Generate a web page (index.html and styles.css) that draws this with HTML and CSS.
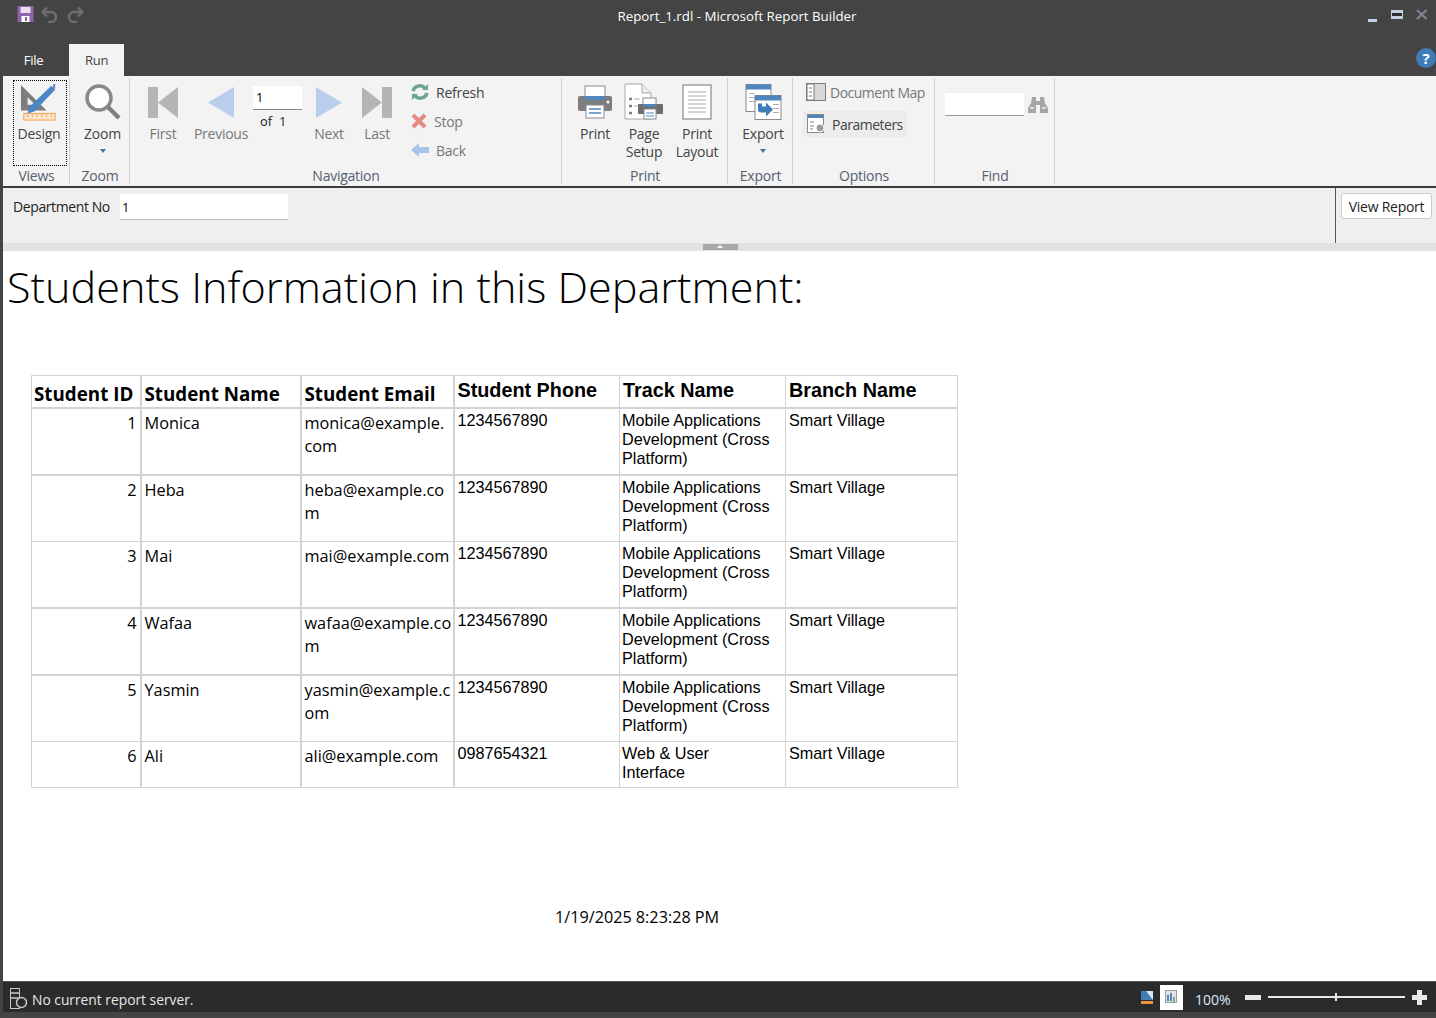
FILE: index.html
```html
<!DOCTYPE html>
<html lang="en">
<head>
    <meta charset="UTF-8">
    <meta name="viewport" content="width=device-width, initial-scale=1.0">
    <title>Report_1.rdl - Microsoft Report Builder</title>
    <link rel="stylesheet" href="styles.css">
</head>

<body>
    <header class="titlebar">
        <div class="qat">
            <svg width="18" height="17" viewBox="0 0 18 17"><rect x="0.5" y="0" width="16" height="16" fill="#8e63a9"/><rect x="3.5" y="1" width="10" height="6" fill="#e8e0f0"/><rect x="4.5" y="10" width="8" height="6" fill="#fff"/><rect x="8" y="11" width="2" height="4" fill="#8e63a9"/></svg>
            <svg width="20" height="17" viewBox="0 0 20 17" fill="none" stroke="#6e6e6e" stroke-width="2.4"><path d="M7 1.5 2.5 6 7 10.5"/><path d="M3 6h8a5 5 0 0 1 0 10H8"/></svg>
            <svg width="20" height="17" viewBox="0 0 20 17" fill="none" stroke="#6e6e6e" stroke-width="2.4"><path d="M13 1.5 17.500 6 13 10.500"/><path d="M17 6H9a5 5 0 0 0 0 10h3"/></svg>
        </div>
        <div class="window-title">Report_1.rdl - Microsoft Report Builder</div>
        <div class="window-btns">
            <svg class="win-min" width="12" height="6" viewBox="0 0 12 6"><rect x="1" y="2" width="9" height="3" fill="#c3cfe2"/></svg>
            <svg width="13" height="10" viewBox="0 0 13 10"><rect x="0.500" y="0.500" width="11" height="8" fill="#2e2e2e" stroke="#c3cfe2"/><rect x="0" y="0" width="12" height="3" fill="#c3cfe2"/><rect x="0" y="6" width="12" height="3" fill="#c3cfe2"/></svg>
            <svg width="12" height="11" viewBox="0 0 12 11"><path d="M1 1l9.500 9M10.500 1 1 10" stroke="#7b8494" stroke-width="2.400"/></svg>
        </div>
    </header>

    <nav class="tabs">
        <a href="#" class="tab">File</a>
        <a href="#" class="tab active">Run</a>
        <span class="help">?</span>
    </nav>

    <div class="ribbon">
        <section class="group group-views">
            <div class="group-body">
                <button class="big focused">
                    <svg class="icon" width="42" height="40" viewBox="0 0 42 40"><path d="M2 2v27h27zM9 15v8h8z" fill="#7d7d7d" fill-rule="evenodd"/><path d="M10 26 34 3l4 4-22 23-7 2z" fill="#4a86c8"/><rect x="36" y="1" width="2" height="5" fill="#4a86c8"/><rect x="5" y="32" width="33" height="7" fill="#fbe6cc" stroke="#f0a050"/><path d="M9 33v3M14 33v3M19 33v3M24 33v3M29 33v3M34 33v3" stroke="#f0a050"/></svg>
                    <span>Design</span>
                </button>
            </div>
            <div class="group-label">Views</div>
        </section>

        <section class="group group-zoom">
            <div class="group-body">
                <button class="big wide">
                    <svg class="icon" width="38" height="38" viewBox="0 0 38 38" fill="none"><circle cx="15" cy="15" r="12" fill="#fff" stroke="#8a8a8a" stroke-width="3.500"/><path d="M24 24l11 11" stroke="#808080" stroke-width="4.500"/></svg>
                    <span>Zoom</span>
                    <i class="caret"></i>
                </button>
            </div>
            <div class="group-label">Zoom</div>
        </section>

        <section class="group group-nav">
            <div class="group-body">
                <button class="big off nav-first">
                    <svg class="icon" width="32" height="32" viewBox="0 0 32 32"><rect x="1" y="1" width="10" height="31" fill="#b5b5b5"/><path d="M11 16.500 31 1v31z" fill="#b5b5b5"/></svg>
                    <span>First</span>
                </button>
                <button class="big off nav-prev">
                    <svg class="icon" width="28" height="32" viewBox="0 0 28 32"><path d="M1 16.500 27 1v31z" fill="#b9cdec"/></svg>
                    <span>Previous</span>
                </button>
                <div class="pager">
                    <input class="page-box" type="text" value="1">
                    <div class="page-of">of&nbsp; 1</div>
                </div>
                <button class="big off nav-next">
                    <svg class="icon" width="28" height="32" viewBox="0 0 28 32"><path d="M27 16.500 1 1v31z" fill="#b9cdec"/></svg>
                    <span>Next</span>
                </button>
                <button class="big off nav-last">
                    <svg class="icon" width="32" height="32" viewBox="0 0 32 32"><path d="M21 16.500 1 1v31z" fill="#b5b5b5"/><rect x="21" y="1" width="10" height="31" fill="#b5b5b5"/></svg>
                    <span>Last</span>
                </button>
                <div class="small-col">
                    <button class="small on">
                        <svg width="20" height="20" viewBox="0 0 20 20" fill="none" stroke="#6ea68d" stroke-width="3.500"><path d="M3 9a7 6.500 0 0 1 12-3"/><path d="M17 11a7 6.500 0 0 1-12 3"/><path d="M12 8h6V2z" fill="#6ea68d" stroke="none"/><path d="M8 12H2v6z" fill="#6ea68d" stroke="none"/></svg>
                        <span>Refresh</span>
                    </button>
                    <button class="small off">
                        <svg width="18" height="18" viewBox="0 0 18 18"><path d="M3 3l12 12M15 3 3 15" stroke="#e58a80" stroke-width="4"/></svg>
                        <span>Stop</span>
                    </button>
                    <button class="small off">
                        <svg width="20" height="18" viewBox="0 0 20 18"><path d="M1 9 9 2v4h10v6H9v4z" fill="#a8c4ea"/></svg>
                        <span>Back</span>
                    </button>
                </div>
            </div>
            <div class="group-label">Navigation</div>
        </section>

        <section class="group group-print">
            <div class="group-body">
                <button class="big print-btn">
                    <svg class="icon" width="36" height="34" viewBox="0 0 36 34"><rect x="8" y="1" width="20" height="14" fill="#fff" stroke="#8a8a8a"/><rect x="1" y="11" width="34" height="15" rx="2" fill="#7d7d7d"/><rect x="8" y="11" width="20" height="4" fill="#4f86c0"/><rect x="9" y="20" width="18" height="13" fill="#fff" stroke="#8a8a8a"/><path d="M12 24h12M12 28h12" stroke="#4f86c0" stroke-width="1.500"/><circle cx="31" cy="17" r="1.500" fill="#fff"/></svg>
                    <span>Print</span>
                </button>
                <button class="big setup-btn">
                    <svg class="icon" width="40" height="38" viewBox="0 0 40 38"><path d="M1 1h17l9 9v26H1z" fill="#fff" stroke="#a8a8a8"/><path d="M18 1v9h9" fill="#eee" stroke="#a8a8a8"/><path d="M5 16h3M5 23h3M5 30h3" stroke="#7d7d7d" stroke-width="2.500"/><path d="M10 16h6M10 23h4" stroke="#b0b0b0"/><rect x="19" y="15" width="13" height="9" fill="#fff" stroke="#8a8a8a"/><rect x="14" y="21" width="25" height="10" rx="1" fill="#6e6e6e"/><rect x="19" y="21" width="14" height="2.500" fill="#4f86c0"/><rect x="20" y="26" width="12" height="10" fill="#fff" stroke="#8a8a8a"/><path d="M22 30h8M22 33h8" stroke="#4f86c0"/></svg>
                    <span>Page<br>Setup</span>
                </button>
                <button class="big layout-btn">
                    <svg class="icon" width="30" height="36" viewBox="0 0 30 36"><rect x="1" y="1" width="28" height="34" fill="#fff" stroke="#a0a0a0" stroke-width="1.500"/><path d="M6 8h18M6 12h18M6 16h18M6 20h18M6 24h18M6 28h18" stroke="#a8a8a8"/></svg>
                    <span>Print<br>Layout</span>
                </button>
            </div>
            <div class="group-label">Print</div>
        </section>

        <section class="group group-export">
            <div class="group-body">
                <button class="big export-btn">
                    <svg class="icon" width="37" height="37" viewBox="0 0 37 37"><rect x="1" y="1" width="25" height="27" fill="#fff" stroke="#8a8a8a"/><rect x="1" y="1" width="25" height="5" fill="#4f86c0"/><path d="M4 10h6M4 14h6M4 18h6" stroke="#b0b0b0"/><rect x="10" y="12" width="26" height="24" fill="#fff" stroke="#8a8a8a"/><rect x="10" y="12" width="26" height="5" fill="#4f86c0"/><path d="M28 21h6M28 25h6M28 29h6" stroke="#b0b0b0"/><path d="M13 20v6a3 3 0 0 0 3 3h5v4l7-7-7-7v4h-3a1 1 0 0 1-1-1v-2z" fill="#3f7cb8"/></svg>
                    <span>Export</span>
                    <i class="caret"></i>
                </button>
            </div>
            <div class="group-label">Export</div>
        </section>

        <section class="group group-options">
            <div class="group-body options-body">
                <button class="small opt off">
                    <svg width="20" height="18" viewBox="0 0 20 18"><rect x="0.500" y="0.500" width="19" height="17" fill="#d8d8d8" stroke="#7d7d7d"/><rect x="1" y="1" width="7" height="16" fill="#fff" stroke="#7d7d7d"/><path d="M3 5h3M3 9h3M3 13h3" stroke="#7d7d7d"/></svg>
                    <span>Document Map</span>
                </button>
                <button class="small opt hovered">
                    <svg width="18" height="20" viewBox="0 0 18 20"><rect x="0.500" y="0.500" width="16" height="18" fill="#fff" stroke="#8a8a8a"/><rect x="1" y="1" width="15" height="3" fill="#4f86c0"/><path d="M3 8h4M3 12h4M3 15h3" stroke="#8a8a8a"/><circle cx="13" cy="14" r="4" fill="#9a9a9a" stroke="#fff"/></svg>
                    <span>Parameters</span>
                </button>
            </div>
            <div class="group-label">Options</div>
        </section>

        <section class="group group-find">
            <div class="group-body find-body">
                <input class="find-box" type="text">
                <svg width="20" height="18" viewBox="0 0 20 18"><path d="M4 1h4v4h4V1h4l1 6 3 5v5h-8V9H8v8H0v-5l3-5z" fill="#a6a6a6"/><path d="M2 12h4M14 12h4" stroke="#dcdcdc" stroke-width="2"/></svg>
            </div>
            <div class="group-label">Find</div>
        </section>
    </div>

    <div class="params">
        <label class="param-label" for="dept">Department No</label>
        <input class="param-input" id="dept" type="text" value="1">
        <div class="param-action">
            <button class="view-btn">View Report</button>
        </div>
    </div>
    <div class="splitter"><span class="grip"></span></div>

    <main class="report">
        <h1 class="report-title">Students Information in this Department:</h1>
        <table class="grid">
            <colgroup>
                <col class="c-id"><col class="c-name"><col class="c-mail"><col class="c-phone"><col class="c-track"><col class="c-branch">
            </colgroup>
            <tr class="row-head heavy">
                <th>Student ID</th><th>Student Name</th><th>Student Email</th>
                <th class="alt">Student Phone</th><th class="alt">Track Name</th><th class="alt">Branch Name</th>
            </tr>
            <tr class="row-tall heavy">
                <td class="num">1</td><td>Monica</td><td>monica@example.<br>com</td>
                <td class="alt">1234567890</td><td class="alt">Mobile Applications Development (Cross Platform)</td><td class="alt">Smart Village</td>
            </tr>
            <tr class="row-tall">
                <td class="num">2</td><td>Heba</td><td>heba@example.co<br>m</td>
                <td class="alt">1234567890</td><td class="alt">Mobile Applications Development (Cross Platform)</td><td class="alt">Smart Village</td>
            </tr>
            <tr class="row-tall heavy">
                <td class="num">3</td><td>Mai</td><td>mai@example.com</td>
                <td class="alt">1234567890</td><td class="alt">Mobile Applications Development (Cross Platform)</td><td class="alt">Smart Village</td>
            </tr>
            <tr class="row-tall heavy">
                <td class="num">4</td><td>Wafaa</td><td>wafaa@example.co<br>m</td>
                <td class="alt">1234567890</td><td class="alt">Mobile Applications Development (Cross Platform)</td><td class="alt">Smart Village</td>
            </tr>
            <tr class="row-tall">
                <td class="num">5</td><td>Yasmin</td><td>yasmin@example.c<br>om</td>
                <td class="alt">1234567890</td><td class="alt">Mobile Applications Development (Cross Platform)</td><td class="alt">Smart Village</td>
            </tr>
            <tr class="row-last">
                <td class="num">6</td><td>Ali</td><td>ali@example.com</td>
                <td class="alt">0987654321</td><td class="alt">Web &amp; User<br>Interface</td><td class="alt">Smart Village</td>
            </tr>
        </table>
        <div class="report-date">1/19/2025 8:23:28 PM</div>
    </main>

    <footer class="statusbar">
        <svg class="status-icon" width="18" height="21" viewBox="0 0 18 21" fill="none" stroke="#c8c8c8"><rect x="0.500" y="0.500" width="9" height="20"/><path d="M1 5h8M1 10h8" stroke-width="1.500"/><circle cx="11.500" cy="14.500" r="5" fill="#2b2b2b" stroke-width="1.500"/></svg>
        <span class="status-text">No current report server.</span>
        <div class="status-right">
            <svg class="view-icon" width="12" height="13" viewBox="0 0 12 13"><rect width="12" height="9" fill="#dbe3ee"/><path d="M0 0h5l7 9H0z" fill="#3f7cb8"/><rect y="10" width="12" height="3" fill="#e8973f"/></svg>
            <span class="view-active"><svg width="13" height="14" viewBox="0 0 13 14"><rect x="0.500" y="0.500" width="11" height="12" fill="#e4e4e4" stroke="#9a9a9a"/><path d="M3 5v6M6 3v8" stroke="#4f86c0" stroke-width="2"/><path d="M9 7v6" stroke="#7cae8e" stroke-width="2"/></svg></span>
            <span class="zoom-pct">100%</span>
            <span class="zoom-minus"></span>
            <span class="zoom-track"><i class="zoom-tick"></i></span>
            <span class="zoom-plus"></span>
        </div>
    </footer>
</body>
</html>
```

FILE: styles.css
```css
*
{
    margin:0;
    padding:0;
    box-sizing:border-box;
    font-family:'Open Sans','Noto Sans',sans-serif;
}
html,body
{
    height:1018px;
    overflow:hidden;
}
body
{
    display:flex;
    flex-direction:column;
    background:#444444;
}
button
{
    background:none;
    border:none;
    font-size:14px;
    letter-spacing:-0.25px;
}

/* title bar and tabs */
.titlebar
{
    height:44px;
    display:flex;
    align-items:flex-start;
    color:#fff;
}
.qat
{
    width:100px;
    padding:6px 0 0 17px;
    display:flex;
    gap:5px;
}
.window-title
{
    flex:1;
    text-align:center;
    font-size:13.300px;
    padding:7px 0 0 38px;
}
.window-btns
{
    width:100px;
    height:30px;
    display:flex;
    align-items:flex-end;
    justify-content:flex-end;
    gap:12px;
    padding:0 8px 10px 0;
}
.win-min
{
    margin-bottom:-3px;
}
.tabs
{
    height:32px;
    display:flex;
    position:relative;
}
.tab
{
    color:#fff;
    text-decoration:none;
    font-size:13px;
    letter-spacing:-0.25px;
    line-height:32px;
    text-align:center;
    width:55px;
    margin-left:6px;
    margin-right:8px;
}
.tab.active
{
    background:#f3f3f3;
    color:#444;
    margin:0;
}
.help
{
    position:absolute;
    right:0;
    top:4px;
    width:20px;
    height:20px;
    border-radius:50%;
    background:#3f7cb8;
    color:#fff;
    font-size:15px;
    font-weight:700;
    line-height:20px;
    text-align:center;
}

/* ribbon */
.ribbon
{
    height:110px;
    margin-left:3px;
    background:#f3f3f3;
    display:flex;
    color:#555;
}
.group
{
    display:flex;
    flex-direction:column;
    border-right:1px solid #d0d0d0;
    margin:2px 0;
}
.group-body
{
    flex:1;
    min-height:0;
    display:flex;
    align-items:flex-start;
}
.group-label
{
    height:20px;
    line-height:20px;
    flex:none;
    margin-top:auto;
    padding:2px 0 0 1px;
    text-align:center;
    font-size:14px;
    letter-spacing:-0.25px;
    color:#55606e;
}
.group-views { width:67px; }
.group-zoom { width:60px; }
.group-nav { width:432px; }
.group-print { width:166px; }
.group-export { width:65px; }
.group-options { width:142px; }
.group-find { width:120px; }

.big
{
    display:flex;
    flex-direction:column;
    align-items:center;
    color:#444;
    line-height:18px;
    height:86px;
    margin-top:2px;
    flex:none;
}
.big .icon
{
    height:38px;
    margin:3px 0 4px;
    display:block;
    flex:none;
}
.big span
{
    display:block;
}
.big.off, .small.off
{
    color:#777;
}
.big .caret
{
    margin-top:6px;
}
.caret
{
    display:block;
    width:0;
    height:0;
    border:3px solid transparent;
    border-top:4px solid #4a6fa5;
    border-bottom:0;
}
.focused
{
    width:54px;
    margin-left:10px;
    padding-right:2px;
    border:1px dotted #000;
}
.big.focused .icon
{
    margin:2px 0 4px;
}
.wide
{
    width:60px;
    padding-left:5px;
}
.nav-first { width:46px; margin-left:10px; }
.nav-prev { width:56px; margin-left:7px; }
.nav-next { width:40px; margin-left:7px; }
.nav-last { width:40px; margin-left:8px; }
.pager
{
    width:49px;
    margin-left:4px;
    padding-top:7px;
}
.page-box
{
    width:49px;
    height:24px;
    background:#fff;
    border:none;
    border-bottom:1px solid #888;
    padding-left:3px;
    font-size:13px;
    color:#000;
}
.page-of
{
    padding:2px 0 0 7px;
    font-size:13px;
    color:#222;
}
.small-col
{
    margin-left:13px;
    padding-top:2px;
    display:flex;
    flex-direction:column;
    gap:5px;
}
.small
{
    height:24px;
    display:flex;
    align-items:center;
    gap:6px;
    color:#444;
}
.print-btn { width:44px; margin-left:11px; }
.setup-btn { width:50px; margin-left:2px; }
.layout-btn { width:50px; margin-left:3px; }
.export-btn { width:50px; margin-left:10px; }
.options-body
{
    flex-direction:column;
    padding:2px 0 0 13px;
    gap:7px;
}
.opt
{
    gap:4px;
    letter-spacing:-0.5px;
}
.hovered
{
    width:104px;
    height:26px;
    margin-left:-3px;
    padding-left:4px;
    gap:7px;
    background:#ececec;
}
.find-body
{
    padding:14px 0 0 10px;
    gap:4px;
    align-items:center;
    height:39px;
    flex:none;
}
.find-box
{
    width:79px;
    height:23px;
    background:#fff;
    border:none;
    border-bottom:1px solid #999;
}

/* parameter panel */
.params
{
    height:57px;
    margin-left:3px;
    background:#efefef;
    border-top:2px solid #3c3c3c;
    display:flex;
    color:#222;
    font-size:14px;
    letter-spacing:-0.4px;
}
.param-label
{
    padding:9px 0 0 10px;
    width:117px;
}
.param-input
{
    width:168px;
    height:26px;
    margin-top:6px;
    background:#fff;
    border:none;
    border-bottom:1px solid #bbb;
    padding-left:2px;
    font-size:13px;
}
.param-action
{
    margin-left:auto;
    width:101px;
    border-left:1px solid #555;
    padding:5px 0 0 5px;
}
.view-btn
{
    width:91px;
    height:26px;
    background:#fff;
    border:1px solid #ccc;
    border-radius:3px;
    color:#222;
}
.splitter
{
    height:8px;
    margin-left:3px;
    background:#e2e2e2;
    position:relative;
}
.grip
{
    position:absolute;
    left:700px;
    top:1px;
    width:35px;
    height:6px;
    background:#a8a8a8;
}
.grip::after
{
    content:"";
    position:absolute;
    left:14px;
    top:1px;
    border:3px solid transparent;
    border-bottom:3px solid #fff;
    border-top:0;
}

/* report body */
.report
{
    height:730px;
    margin-left:3px;
    background:#fff;
    color:#000;
}
.report-title
{
    font-weight:300;
    font-size:43.200px;
    line-height:60px;
    padding:6px 0 0 4px;
    height:124px;
}
.grid
{
    margin-left:28px;
    border-collapse:collapse;
    table-layout:fixed;
    width:926px;
}
.c-id { width:109px; }
.c-name { width:160px; }
.c-mail { width:153px; }
.c-phone { width:166px; }
.c-track { width:166px; }
.c-branch { width:172px; }
.grid th, .grid td
{
    border:1px solid #d3d3d3;
    vertical-align:top;
    text-align:left;
    padding:0 2px 0 3px;
    font-size:16.300px;
    line-height:23px;
    overflow:hidden;
    white-space:nowrap;
}
.grid th:first-child
{
    padding-left:2px;
}
.grid th:nth-child(-n+3), .grid td:nth-child(-n+3)
{
    border-right-width:2px;
}
.grid tr.heavy th, .grid tr.heavy td
{
    border-bottom-width:2px;
}
.grid th
{
    font-size:18.800px;
    font-weight:700;
    line-height:26px;
    padding-top:5px;
}
.grid td
{
    padding-top:3px;
}
.grid th.alt
{
    font-family:'Liberation Sans',sans-serif;
    font-size:19.800px;
    padding-top:1px;
}
.grid td.alt
{
    font-family:'Liberation Sans',sans-serif;
    font-size:16.200px;
    line-height:19px;
    padding-top:2px;
    white-space:normal;
}
.grid td.alt:nth-child(5)
{
    padding-left:2px;
}
.grid td.num
{
    text-align:right;
    padding-right:3px;
}
.row-head { height:31px; }
.row-tall { height:66.800px; }
.row-last { height:46px; }
.report-date
{
    margin-top:116px;
    padding-left:552px;
    font-size:16.200px;
    line-height:26px;
}

/* status bar */
.statusbar
{
    height:31px;
    margin:0 0 6px 3px;
    background:#2b2b2b;
    border-top:1px solid #555;
    color:#e8e8e8;
    display:flex;
    align-items:center;
    padding-left:7px;
    font-size:13.800px;
}
.status-icon
{
    margin-top:3px;
}
.status-text
{
    margin-left:4px;
    padding-top:5px;
}
.status-right
{
    margin-left:auto;
    display:flex;
    align-items:center;
}
.view-active
{
    width:23px;
    height:25px;
    background:#fff;
    margin-left:7px;
    display:flex;
    align-items:center;
    justify-content:center;
}
.zoom-pct
{
    margin-left:12px;
    width:50px;
    padding-top:4px;
    color:#dce8f5;
    font-size:14px;
}
.zoom-minus
{
    width:16px;
    height:5px;
    background:#e8e8e8;
}
.zoom-track
{
    width:137px;
    height:2px;
    margin:0 7px;
    background:#e8e8e8;
    position:relative;
}
.zoom-tick
{
    position:absolute;
    left:67px;
    top:-3px;
    width:2px;
    height:8px;
    background:#e8e8e8;
}
.zoom-plus
{
    width:15px;
    height:15px;
    margin-right:9px;
    background:
        linear-gradient(#e8e8e8,#e8e8e8) center/15px 5px no-repeat,
        linear-gradient(#e8e8e8,#e8e8e8) center/5px 15px no-repeat;
}
```
